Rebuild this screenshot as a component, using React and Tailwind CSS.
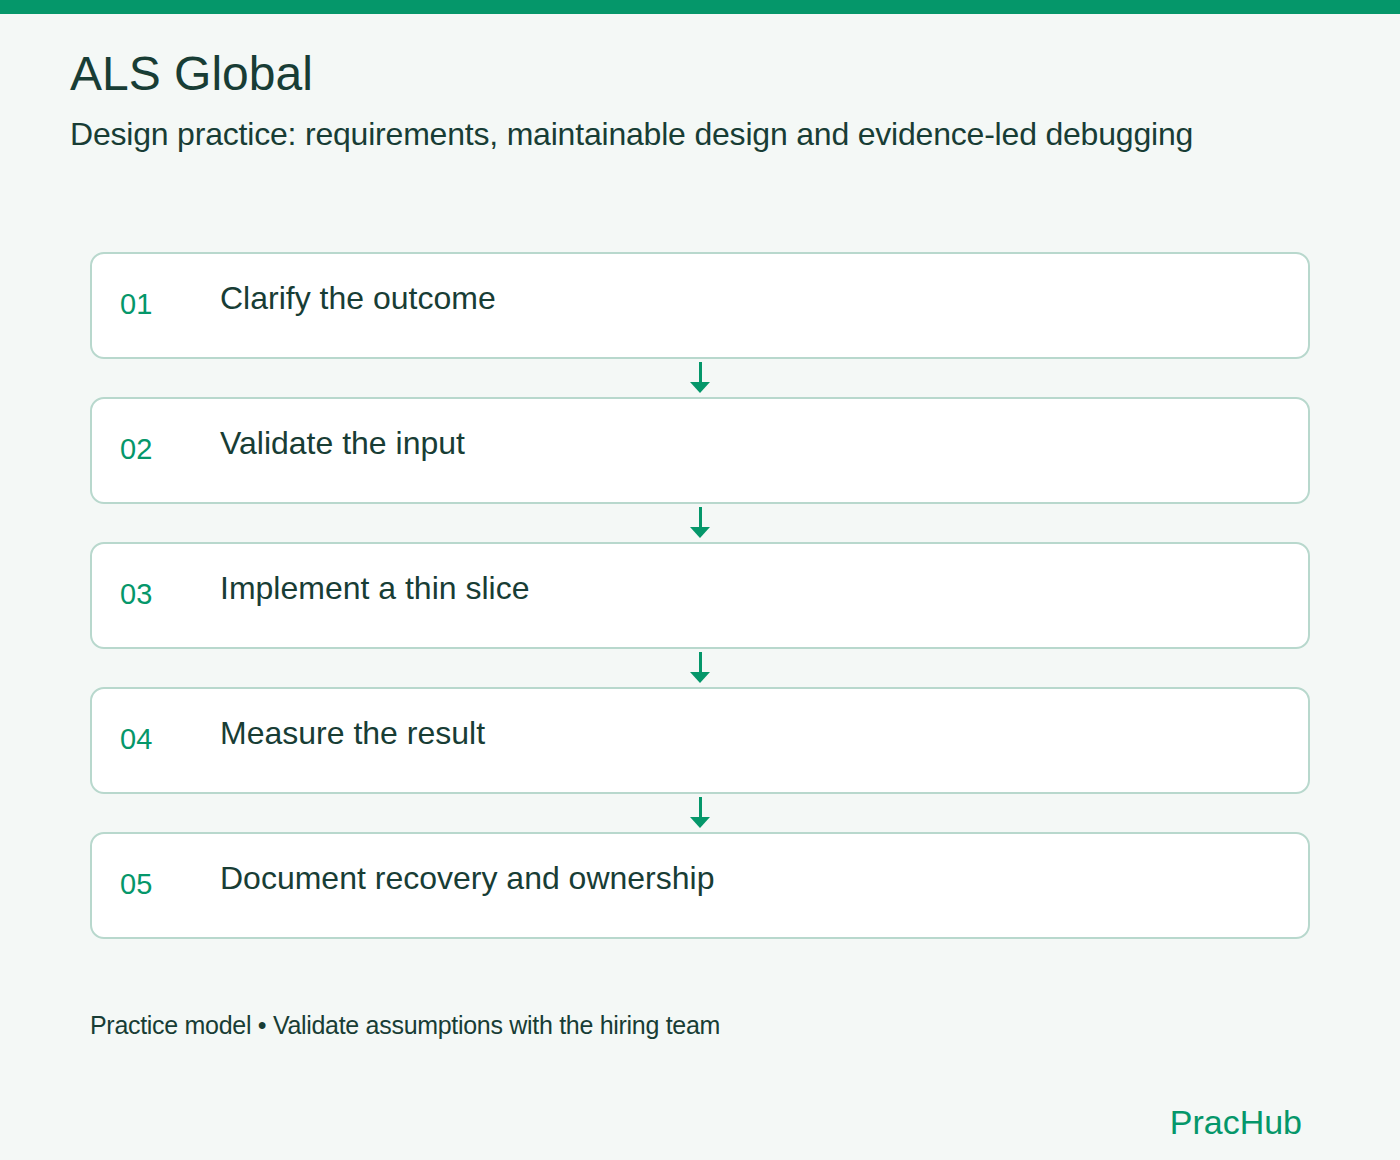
export default function App() {
  const steps = ["Clarify the outcome", "Validate the input", "Implement a thin slice", "Measure the result", "Document recovery and ownership"];
  return (
    <div className="w-[1400px] h-[1160px] bg-[#f4f8f6] text-[#183d35] flex flex-col" style={{ fontFamily: '"Liberation Sans", Arial, sans-serif' }}>
      <div className="h-[14px] bg-[#05976a]" />
      <div className="px-[70px] pt-[32px]">
        <h1 className="text-[48px] leading-[56px]">ALS Global</h1>
        <p className="text-[32px] leading-[36px] mt-[14px] tracking-[-0.2px]">Design practice: requirements, maintainable design and evidence-led debugging</p>
      </div>
      <div className="mx-[90px] mt-[100px] flex flex-col">
        {steps.map((s, i) => (
          <div key={i} className="flex flex-col">
            {i > 0 && (
              <div className="h-[38px] flex flex-col items-center pt-[3px]">
                <div className="w-[3px] h-[20px] bg-[#05976a]" />
                <div className="w-0 h-0 border-l-[10px] border-r-[10px] border-t-[11px] border-l-transparent border-r-transparent border-t-[#05976a]" />
              </div>
            )}
            <div className="h-[107px] bg-white border-2 border-[#b8d8cd] rounded-[14px] flex items-start pt-[24px] pl-[28px]">
              <span className="w-[100px] text-[29px] text-[#05976a] mt-[5px]">0{i + 1}</span>
              <span className="text-[32px] leading-[40px]">{s}</span>
            </div>
          </div>
        ))}
      </div>
      <p className="mx-[90px] mt-[68px] text-[25px] tracking-[-0.3px]">Practice model • Validate assumptions with the hiring team</p>
      <p className="mr-[98px] mt-[52px] text-right text-[34px] text-[#05976a]">PracHub</p>
    </div>
  );
}
